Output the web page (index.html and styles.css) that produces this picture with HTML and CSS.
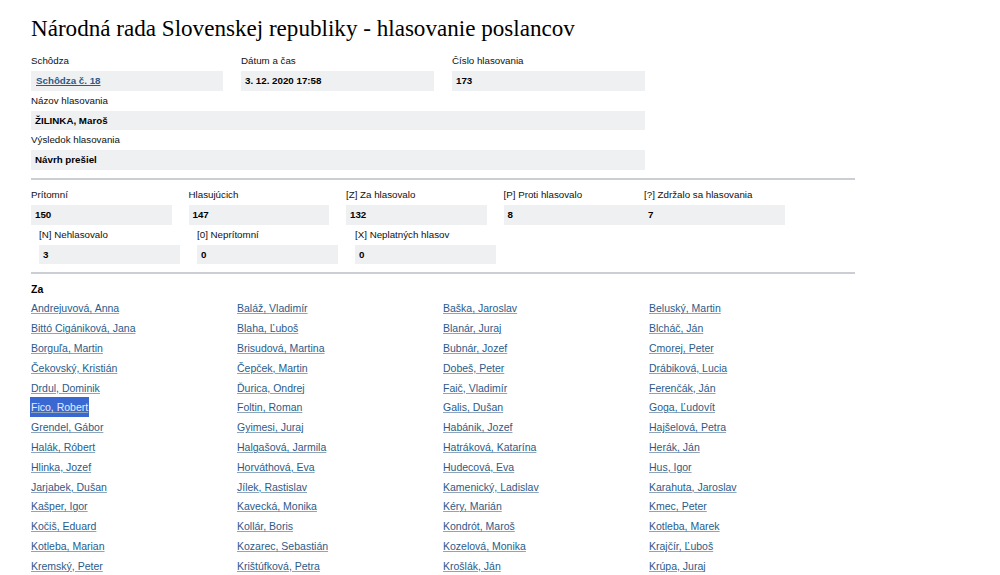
FILE: index.html
```html
<!DOCTYPE html>
<html lang="sk">
<head>
    <meta charset="UTF-8">
    <title>Národná rada Slovenskej republiky - hlasovanie poslancov</title>
    <link rel="stylesheet" href="styles.css">
</head>
<body>
    <div class="page">
        <h1>Národná rada Slovenskej republiky - hlasovanie poslancov</h1>

        <!-- Hlavička hlasovania -->
        <div class="fields">
            <div class="field">
                <div class="label">Schôdza</div>
                <div class="value"><a href="#">Schôdza č. 18</a></div>
            </div>
            <div class="field">
                <div class="label">Dátum a čas</div>
                <div class="value">3. 12. 2020 17:58</div>
            </div>
            <div class="field">
                <div class="label">Číslo hlasovania</div>
                <div class="value">173</div>
            </div>
            <div class="field wide">
                <div class="label">Názov hlasovania</div>
                <div class="value">ŽILINKA, Maroš</div>
            </div>
            <div class="field wide">
                <div class="label">Výsledok hlasovania</div>
                <div class="value">Návrh prešiel</div>
            </div>
        </div>

        <hr>

        <!-- Súhrn -->
        <div class="stats">
            <div class="stat">
                <div class="label">Prítomní</div>
                <div class="value">150</div>
            </div>
            <div class="stat">
                <div class="label">Hlasujúcich</div>
                <div class="value">147</div>
            </div>
            <div class="stat">
                <div class="label">[Z] Za hlasovalo</div>
                <div class="value">132</div>
            </div>
            <div class="stat tight">
                <div class="label">[P] Proti hlasovalo</div>
                <div class="value">8</div>
            </div>
            <div class="stat">
                <div class="label">[?] Zdržalo sa hlasovania</div>
                <div class="value">7</div>
            </div>
        </div>
        <div class="stats sub">
            <div class="stat">
                <div class="label">[N] Nehlasovalo</div>
                <div class="value">3</div>
            </div>
            <div class="stat">
                <div class="label">[0] Neprítomní</div>
                <div class="value">0</div>
            </div>
            <div class="stat">
                <div class="label">[X] Neplatných hlasov</div>
                <div class="value">0</div>
            </div>
        </div>

        <hr>

        <!-- Poslanci -->
        <h2>Za</h2>
        <div class="members">
            <a href="#">Andrejuvová, Anna</a>
            <a href="#">Baláž, Vladimír</a>
            <a href="#">Baška, Jaroslav</a>
            <a href="#">Beluský, Martin</a>
            <a href="#">Bittó Cigániková, Jana</a>
            <a href="#">Blaha, Ľuboš</a>
            <a href="#">Blanár, Juraj</a>
            <a href="#">Blcháč, Ján</a>
            <a href="#">Borguľa, Martin</a>
            <a href="#">Brisudová, Martina</a>
            <a href="#">Bubnár, Jozef</a>
            <a href="#">Cmorej, Peter</a>
            <a href="#">Čekovský, Kristián</a>
            <a href="#">Čepček, Martin</a>
            <a href="#">Dobeš, Peter</a>
            <a href="#">Drábiková, Lucia</a>
            <a href="#">Drdul, Dominik</a>
            <a href="#">Ďurica, Ondrej</a>
            <a href="#">Faič, Vladimír</a>
            <a href="#">Ferenčák, Ján</a>
            <span><a href="#" class="selected">Fico, Robert</a></span>
            <a href="#">Foltin, Roman</a>
            <a href="#">Galis, Dušan</a>
            <a href="#">Goga, Ľudovít</a>
            <a href="#">Grendel, Gábor</a>
            <a href="#">Gyimesi, Juraj</a>
            <a href="#">Habánik, Jozef</a>
            <a href="#">Hajšelová, Petra</a>
            <a href="#">Halák, Róbert</a>
            <a href="#">Halgašová, Jarmila</a>
            <a href="#">Hatráková, Katarína</a>
            <a href="#">Herák, Ján</a>
            <a href="#">Hlinka, Jozef</a>
            <a href="#">Horváthová, Eva</a>
            <a href="#">Hudecová, Eva</a>
            <a href="#">Hus, Igor</a>
            <a href="#">Jarjabek, Dušan</a>
            <a href="#">Jílek, Rastislav</a>
            <a href="#">Kamenický, Ladislav</a>
            <a href="#">Karahuta, Jaroslav</a>
            <a href="#">Kašper, Igor</a>
            <a href="#">Kavecká, Monika</a>
            <a href="#">Kéry, Marián</a>
            <a href="#">Kmec, Peter</a>
            <a href="#">Kočiš, Eduard</a>
            <a href="#">Kollár, Boris</a>
            <a href="#">Kondrót, Maroš</a>
            <a href="#">Kotleba, Marek</a>
            <a href="#">Kotleba, Marian</a>
            <a href="#">Kozarec, Sebastián</a>
            <a href="#">Kozelová, Monika</a>
            <a href="#">Krajčír, Ľuboš</a>
            <a href="#">Kremský, Peter</a>
            <a href="#">Krištúfková, Petra</a>
            <a href="#">Krošlák, Ján</a>
            <a href="#">Krúpa, Juraj</a>
        </div>
    </div>
</body>
</html>
```

FILE: styles.css
```css
body {
    margin: 0;
    font-family: "Liberation Sans", Arial, sans-serif;
    font-size: 9.75px;
    color: #111;
    background: #fff;
}
.page {
    padding: 0 31px 20px 31px;
}
h1 {
    margin: 14px 0 9px 0;
    font-family: "Liberation Serif", "Times New Roman", serif;
    font-size: 23.1px;
    font-weight: normal;
    line-height: 28px;
    color: #000;
}
.label {
    line-height: 20px;
    height: 20px;
}
.value {
    background: #eff0f2;
    height: 19.5px;
    line-height: 19.5px;
    padding: 0 4px;
    font-weight: bold;
    color: #000;
}
.value a {
    color: #2b5b89;
    padding-left: 1px;
}
.fields {
    display: grid;
    grid-template-columns: 192px 193px 193px;
    column-gap: 18px;
    width: 614px;
}
.field.wide {
    grid-column: 1 / 4;
}
hr {
    width: 824px;
    margin: 8.5px 0 5px 0;
    border: none;
    border-top: 2px solid #cbcfd3;
}
.stats {
    display: flex;
}
.stat {
    width: 140.5px;
    margin-right: 17px;
}
.stat.tight {
    margin-right: 0;
}
.stats.sub {
    padding-left: 8px;
}
.stats.sub .stat {
    width: 140.5px;
    margin-right: 17.5px;
}
.stats.sub + hr {
    margin-top: 7.5px;
}
h2 {
    margin: 1px 0 0 0;
    font-size: 10.5px;
    line-height: 20px;
    font-weight: bold;
    color: #000;
}
.members {
    display: grid;
    grid-template-columns: repeat(4, 206px);
    grid-auto-rows: 19.8px;
    align-items: center;
    font-size: 10.5px;
}
.members a {
    color: #2b5b89;
    text-decoration-color: #8ea4bb;
    justify-self: start;
}
.members a.selected {
    background: #3a68d2;
    color: #e6ecfb;
    padding: 4px 1px 4px 1px;
    margin-left: -1px;
}
```
